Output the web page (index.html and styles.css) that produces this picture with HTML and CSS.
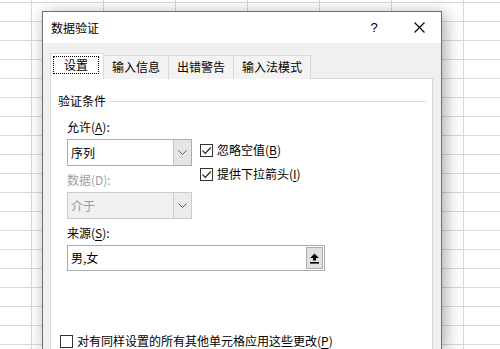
FILE: index.html
```html
<!DOCTYPE html>
<html>
  <head>
    <meta charset="utf-8" />
    <title>数据验证</title>
    <link rel="stylesheet" href="styles.css">
  </head>
  <body>
    <div class="dialog">
      <div class="titlebar">
        <span class="title">数据验证</span>
        <span class="help">?</span>
        <span class="close">
          <svg width="11" height="11" viewBox="0 0 11 11">
            <path d="M0.5 0.5 L10.5 10.5 M10.5 0.5 L0.5 10.5" stroke="#000" stroke-width="1.1" fill="none" />
          </svg>
        </span>
      </div>

      <div class="dialog-body">
        <div class="tabs">
          <div class="tab active"><span class="focus">设置</span></div>
          <div class="tab">输入信息</div>
          <div class="tab">出错警告</div>
          <div class="tab">输入法模式</div>
        </div>

        <div class="panel">
          <div class="group-title">
            <span>验证条件</span>
            <span class="group-line"></span>
          </div>

          <div class="criteria">
            <div class="left-col">
              <div class="field-label">允许(<u>A</u>):</div>
              <div class="select">
                <span class="select-text">序列</span>
                <span class="select-btn">
                  <svg width="9" height="5" viewBox="0 0 9 5">
                    <path d="M0.5 0.5 L4.5 4.5 L8.5 0.5" stroke="#606060" stroke-width="1" fill="none" />
                  </svg>
                </span>
              </div>
              <div class="field-label disabled">数据(D):</div>
              <div class="select select-disabled">
                <span class="select-text">介于</span>
                <span class="select-btn">
                  <svg width="9" height="5" viewBox="0 0 9 5">
                    <path d="M0.5 0.5 L4.5 4.5 L8.5 0.5" stroke="#606060" stroke-width="1" fill="none" />
                  </svg>
                </span>
              </div>
            </div>

            <div class="right-col">
              <label class="check-row">
                <span class="checkbox">
                  <svg width="11" height="11" viewBox="0 0 11 11">
                    <path d="M1.5 5.5 L4.3 8.3 L9.8 2.5" stroke="#222" stroke-width="1.2" fill="none" />
                  </svg>
                </span>
                <span>忽略空值(<u>B</u>)</span>
              </label>
              <label class="check-row">
                <span class="checkbox">
                  <svg width="11" height="11" viewBox="0 0 11 11">
                    <path d="M1.5 5.5 L4.3 8.3 L9.8 2.5" stroke="#222" stroke-width="1.2" fill="none" />
                  </svg>
                </span>
                <span>提供下拉箭头(<u>I</u>)</span>
              </label>
            </div>
          </div>

          <div class="source">
            <div class="field-label">来源(<u>S</u>):</div>
            <div class="source-input">
              <span class="select-text">男,女</span>
              <span class="pick-btn">
                <svg width="9" height="11" viewBox="0 0 9 11">
                  <path d="M4.5 0.5 L8.8 5 L6 5 L6 7.5 L3 7.5 L3 5 L0.2 5 Z" fill="#000" />
                  <rect x="0" y="9" width="9" height="1.6" fill="#000" />
                </svg>
              </span>
            </div>
          </div>

          <label class="check-row apply-all">
            <span class="checkbox"></span>
            <span>对有同样设置的所有其他单元格应用这些更改(<u>P</u>)</span>
          </label>
        </div>
      </div>
    </div>
  </body>
</html>
```

FILE: styles.css
```css
body {
  margin: 0;
  width: 500px;
  height: 349px;
  overflow: hidden;
  font-family: "Noto Sans CJK SC", "Microsoft YaHei", sans-serif;
  font-size: 12px;
  color: #000;
  background-color: #fff;
  background-image:
    linear-gradient(to right, #d9d9d9 1px, transparent 1px),
    linear-gradient(to bottom, #d9d9d9 1px, transparent 1px);
  background-size: 72px 19px;
  background-position: 31px 2px;
}
u {
  text-decoration-thickness: 1px;
  text-underline-offset: 2px;
}
.dialog {
  box-sizing: border-box;
  width: 400px;
  height: 338px;
  overflow: hidden;
  margin: 11px 0 0 42px;
  border: 1px solid #707070;
  border-bottom: none;
  background: #f0f0f0;
  box-shadow: 3px 3px 16px rgba(0, 0, 0, 0.35);
}
.titlebar {
  height: 31px;
  display: flex;
  align-items: center;
  padding-left: 8px;
  padding-right: 12px;
  background: #fff;
}
.title {
  flex: 1;
  line-height: 16px;
}
.help {
  width: 20px;
  text-align: center;
  font-family: "Liberation Sans", Arial, sans-serif;
  font-size: 13px;
  margin-right: 25px;
}
.close {
  width: 20px;
  display: flex;
  justify-content: center;
}
.dialog-body {
  padding: 10px 8px 0 7px;
}
.tabs {
  display: flex;
  align-items: flex-end;
  height: 26px;
  margin-bottom: -1px;
  position: relative;
  z-index: 1;
}
.tab {
  box-sizing: border-box;
  height: 24px;
  line-height: 22px;
  padding: 0 8px;
  margin-left: -1px;
  border: 1px solid #d9d9d9;
  border-bottom: none;
  background: #f3f3f3;
}
.tab.active {
  height: 26px;
  margin-left: 0;
  padding: 2px 4px 0 2px;
  background: #fff;
  position: relative;
  z-index: 2;
}
.focus {
  display: block;
  border: 1px dotted #000;
  padding: 0 10px;
  line-height: 16px;
}
.panel {
  height: 300px;
  background: #fff;
  border: 1px solid #d9d9d9;
  padding: 13px 6px 0 7px;
}
.group-title {
  display: flex;
  align-items: center;
  gap: 4px;
  line-height: 18px;
}
.group-line {
  flex: 1;
  border-top: 1px solid #dcdcdc;
}
.criteria {
  display: flex;
  margin-left: 9px;
  margin-top: 8px;
}
.left-col {
  width: 125px;
}
.field-label {
  line-height: 18px;
  margin-bottom: 3px;
}
.field-label.disabled {
  color: #a0a0a0;
  margin-top: 5px;
}
.select {
  box-sizing: border-box;
  height: 27px;
  display: flex;
  border: 1px solid #adadad;
  background: #fff;
}
.select-text {
  flex: 1;
  padding-left: 3px;
  line-height: 25px;
}
.select-btn {
  width: 17px;
  display: flex;
  align-items: center;
  justify-content: center;
  background: #e5e5e5;
  border-left: 1px solid #c4c4c4;
}
.select-disabled {
  background: #f0f0f0;
  border-color: #cccccc;
  color: #9a9a9a;
}
.select-disabled .select-btn {
  background: #ececec;
  border-left-color: #cccccc;
}
.right-col {
  display: flex;
  flex-direction: column;
  gap: 6px;
  margin-left: 8px;
  padding-top: 23px;
}
.check-row {
  display: flex;
  align-items: center;
  gap: 4px;
  line-height: 18px;
}
.checkbox {
  box-sizing: border-box;
  width: 13px;
  height: 13px;
  border: 1px solid #333;
  background: #fff;
  display: flex;
  align-items: center;
  justify-content: center;
}
.source {
  margin-left: 9px;
  margin-top: 5px;
}
.source-input {
  box-sizing: border-box;
  width: 258px;
  height: 26px;
  display: flex;
  border: 1px solid #adadad;
  padding: 1px;
}
.source-input .select-text {
  line-height: 22px;
  padding-left: 2px;
}
.pick-btn {
  box-sizing: border-box;
  width: 17px;
  display: flex;
  align-items: center;
  justify-content: center;
  background: #e1e1e1;
  border: 1px solid #adadad;
}
.apply-all {
  margin-top: 61px;
  margin-left: 2px;
}
```
